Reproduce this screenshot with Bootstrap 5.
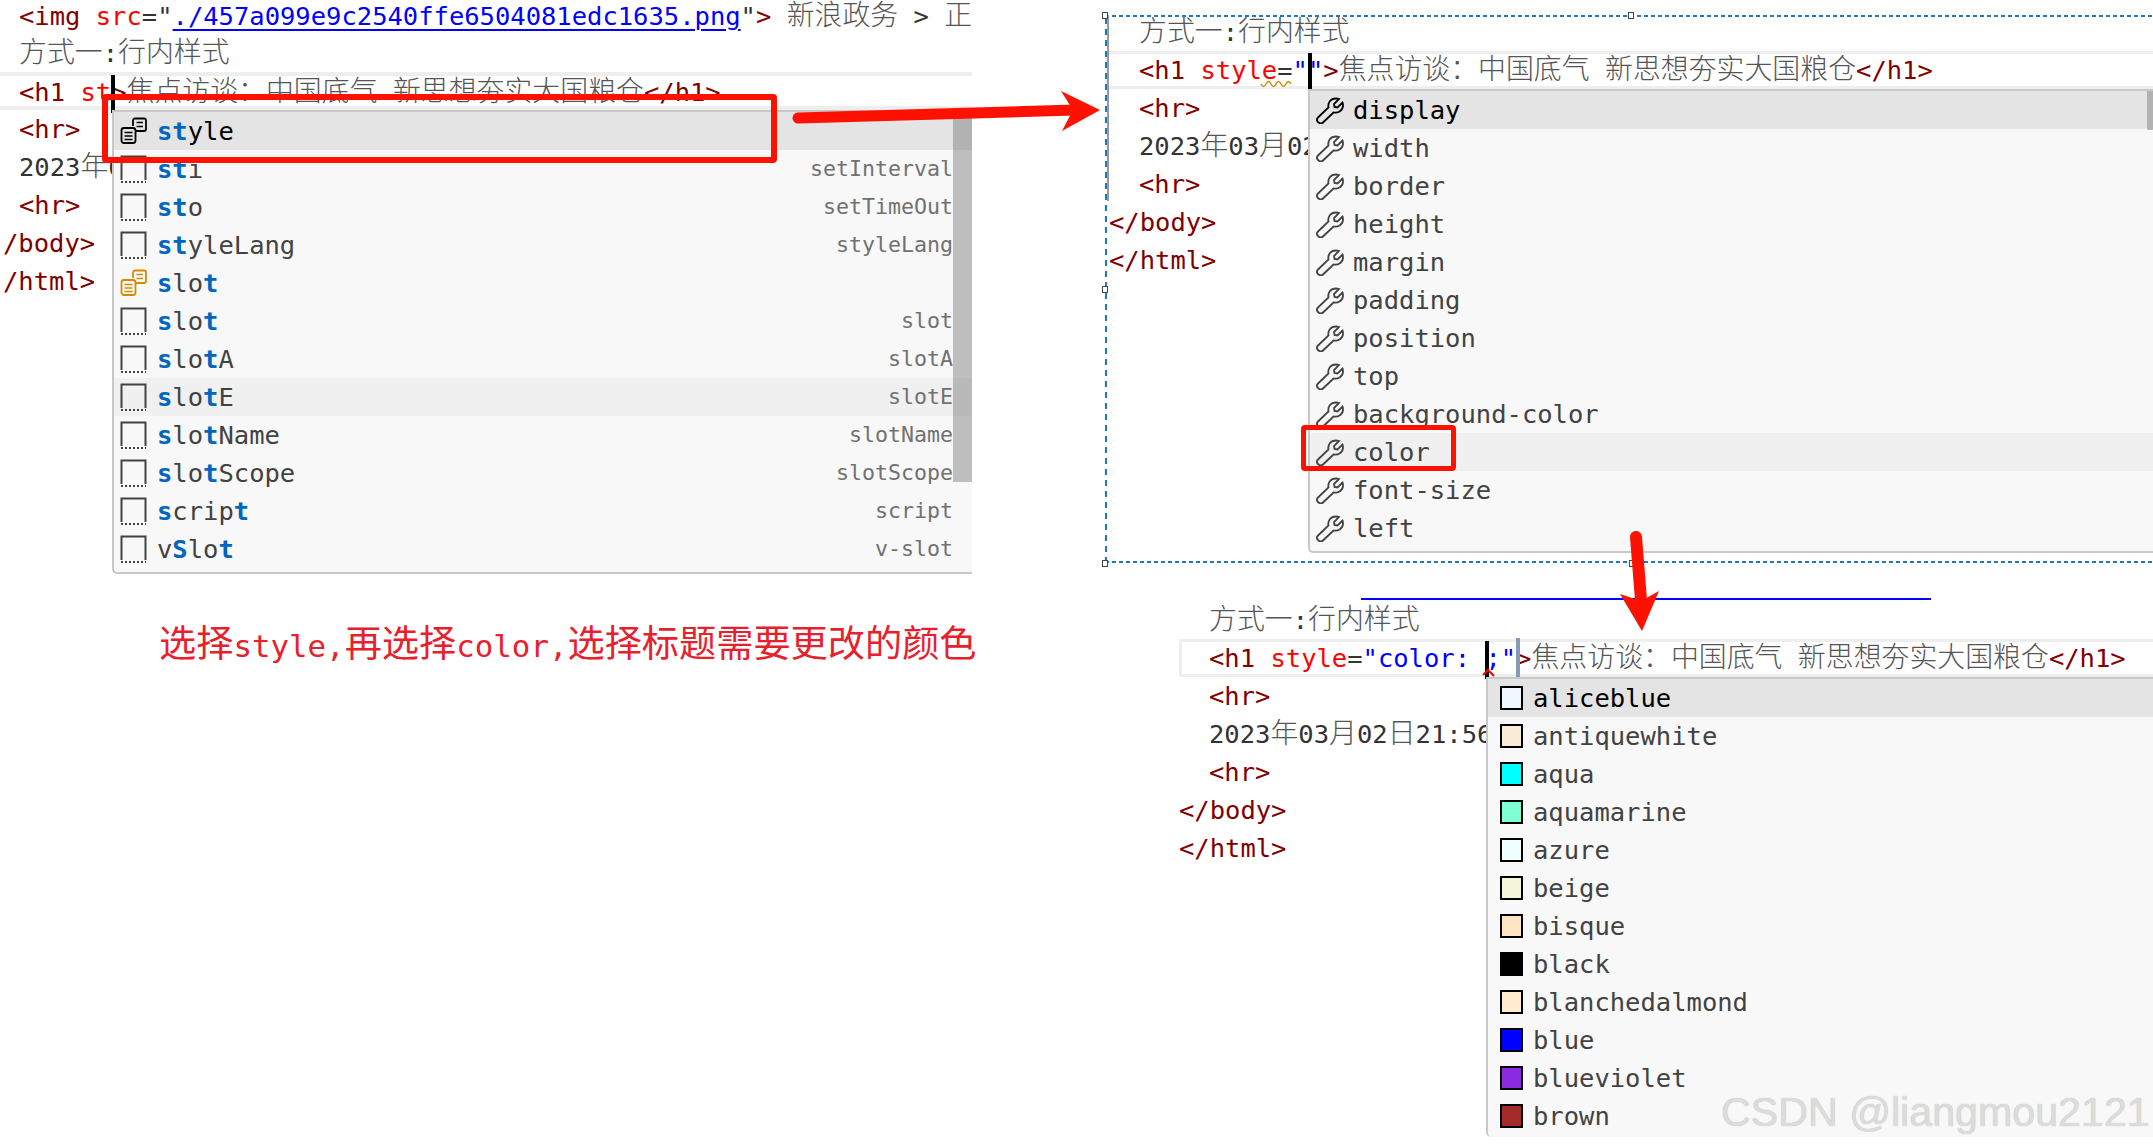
<!DOCTYPE html>
<html lang="zh">
<head>
<meta charset="utf-8">
<title>行内样式</title>
<link href="https://cdn.jsdelivr.net/npm/bootstrap@5.3.0/dist/css/bootstrap.min.css" rel="stylesheet">
<style>
html,body{margin:0;background:#fff}
.canvas{position:relative;width:2153px;height:1146px;overflow:hidden;background:#fff;font-family:"DejaVu Sans Mono","Noto Sans CJK SC",monospace;font-size:25.5px;color:#333}
.pane{position:absolute;overflow-x:clip;overflow-y:visible}
.pane-a{left:0;top:0;width:972px;height:576px}
.pane-b{left:1105px;top:5px;width:1048px;height:553px;padding-top:8px}
.pane-c{left:1179px;top:593px;width:974px;height:548px;padding-top:8px}
.code-row{height:38px;line-height:39px;white-space:pre;box-sizing:border-box;padding-left:var(--ind)}
.pane-a{--ind:19px}.pane-b{--ind:34px}.pane-c{--ind:30px}
.pane-a .first{height:34px;line-height:32px}
.outdent{padding-left:var(--out)}
.pane-a{--out:3px}.pane-b{--out:4px}.pane-c{--out:0px}
.band{border:3px solid #eee;line-height:33px;padding-left:calc(var(--ind) - 3px)}
.pane-a .band{border-width:4px 0;line-height:31px;padding-left:var(--ind)}
.pane-c .band{border-right:0}.pane-b .band{border-right:0}
.tg{color:#800000}.at{color:#f00}.vl{color:#00f}
.cjk{display:inline-block;font-family:"Noto Sans CJK SC",sans-serif;font-size:27.9px;line-height:1;color:#555;font-weight:300}
.lnk{color:#00f;text-decoration:underline;text-decoration-thickness:2px;text-underline-offset:4px}
.caret-wrap{position:relative;display:inline-block;width:0;height:0}
.caret-bar{position:absolute;left:0;top:-26px;width:4px;height:38px;background:#000}
.caret-alt{background:#8699b8;height:41px;top:-29px;left:0}
.sug{position:absolute;background:#f8f8f8;border-top:2px solid #c8c8c8;border-left:2px solid #c8c8c8;border-bottom:2px solid #c8c8c8;border-radius:0 0 0 5px;overflow:hidden}
.sug-a{left:112px;top:110px;width:860px;height:464px}
.sug-b{left:203px;top:84px;width:845px;height:464px}
.sug-c{left:307px;top:84px;width:667px;height:460px;border-bottom:0}
.sug .list-group-item{height:38px;padding:0;border:0;border-radius:0;background:transparent;color:#424242;white-space:pre;line-height:38px}
.sug .list-group-item.cur{background:#e4e4e4;color:#000}
.sug .list-group-item.hov{background:#f0f0f0}
.sug .list-group-item>span:not(.sw){margin-top:-1px}
.sug-a .list-group-item{padding-left:6px}
.sug-b .list-group-item{padding-left:5px}
.sug-c .list-group-item{padding-left:12px}
.hit{color:#0066bf;font-weight:700}
.det{margin-left:auto;margin-right:19px;font-size:21.6px;color:#717171}
.ico{flex:none;margin-right:10px;display:block}
.ico-w{width:29px;height:27px;margin-right:9px}
.sw{flex:none;width:23px;height:24px;border:2px solid #000;margin-right:10px}
.sbar{position:absolute;right:0;top:0;width:19px;height:370px;background:rgba(110,110,110,.42)}
.sbar-b{width:6px;height:39px}
.rbox{position:absolute;border:6px solid #ff1100;border-radius:4px}
.rbox-a{left:102px;top:94px;width:675px;height:69px}
.rbox-b{left:1301px;top:425px;width:155px;height:46px;border-width:5px}
.sel{position:absolute;left:1105px;top:15px;width:1048px;height:548px;background-repeat:no-repeat,no-repeat,no-repeat;background-image:repeating-linear-gradient(90deg,#1f78c0 0 4px,transparent 4px 7px),repeating-linear-gradient(90deg,#1f78c0 0 4px,transparent 4px 7px),repeating-linear-gradient(0deg,#1f78c0 0 6px,transparent 6px 11px);background-size:100% 2px,100% 2px,2px 100%;background-position:0 0,0 100%,0 0}
.gutter{position:absolute;left:1107px;top:15px;width:2px;height:186px;background:#999}
.hnd{position:absolute;width:6px;height:7px;background:#fff;border:1px solid #444}
.blue-rule{position:absolute;left:1361px;top:598px;width:570px;height:2px;background:#00f}
.capt{position:absolute;left:159px;top:621px;line-height:50px;white-space:pre;color:#e8202c;font-size:30.8px;font-family:"DejaVu Sans Mono",monospace}
.capt .cjk{color:#e8202c;font-size:37.2px;font-weight:400}
.wmark{position:absolute;left:1721px;top:1088px;line-height:48px;white-space:pre;font-family:"Liberation Sans",sans-serif;font-size:41.2px;color:#dcdcdc;text-shadow:0 0 1px #b5b5b5}
.anno{position:absolute;left:0;top:0;pointer-events:none}
</style>
</head>
<body>
<svg width="0" height="0" class="position-absolute">
  <defs>
    <symbol id="i-prop" viewBox="0 0 27 28">
      <path d="M13 9V3.500A2 2 0 0 1 15 1.500H24A2 2 0 0 1 26 3.500V12A2 2 0 0 1 24 14H16" fill="none" stroke="currentColor" stroke-width="1.800"/>
      <rect x="1.500" y="11" width="14" height="15" rx="2.500" fill="none" stroke="currentColor" stroke-width="1.800"/>
      <path d="M16.500 5.500H23M16.500 9.500H23M4.500 15.500H12.500M4.500 19H12.500M4.500 22.500H12.500" stroke="currentColor" stroke-width="1.500"/>
    </symbol>
    <symbol id="i-box" viewBox="0 0 27 28">
      <path d="M1.500 25V1.500H25.500V25" fill="none" stroke="#424242" stroke-width="2"/>
      <path d="M1 27H26" stroke="#424242" stroke-width="2" stroke-dasharray="2 2"/>
    </symbol>
    <symbol id="i-wr" viewBox="0 0 29 27">
      <path d="M3 20.500L13.500 10.500C12.500 6 15.500 1.500 21 1.500C22 1.500 23 1.700 24 2L19 7L19.500 10L22.500 10.500L27.500 5.500C28 6.500 28 7.500 28 8.500C28 13.500 23 16.500 18.500 15.500L8 25.500C6.500 27 4.500 26.500 3 25C1.500 23.500 1.500 22 3 20.500Z" fill="none" stroke="currentColor" stroke-width="1.800"/>
    </symbol>
  </defs>
</svg>

<div class="canvas">

  <!-- left editor -->
  <div class="pane pane-a">
    <div class="code-row first"><span class="tg">&lt;img </span><span class="at">src</span>="<span class="lnk">./457a099e9c2540ffe6504081edc1635.png</span>"<span class="tg">&gt;</span> <span class="cjk">新浪政务</span> &gt; <span class="cjk">正</span></div>
    <div class="code-row"><span class="cjk">方式一</span>:<span class="cjk">行内样式</span></div>
    <div class="code-row band"><span class="tg">&lt;h1 </span><span class="at">st</span><span class="caret-wrap"><span class="caret-bar"></span></span><span class="tg">&gt;</span><span class="cjk">焦点访谈：中国底气</span> <span class="cjk">新思想夯实大国粮仓</span><span class="tg">&lt;/h1&gt;</span></div>
    <div class="code-row tg">&lt;hr&gt;</div>
    <div class="code-row">2023<span class="cjk">年</span>03</div>
    <div class="code-row tg">&lt;hr&gt;</div>
    <div class="code-row outdent tg">/body&gt;</div>
    <div class="code-row outdent tg">/html&gt;</div>

    <div class="sug sug-a list-group">
      <div class="list-group-item cur d-flex align-items-center"><svg class="ico" width="27" height="28"><use href="#i-prop"/></svg><span><span class="hit">st</span>yle</span></div>
      <div class="list-group-item d-flex align-items-center"><svg class="ico" width="27" height="28"><use href="#i-box"/></svg><span><span class="hit">st</span>i</span><span class="det">setInterval</span></div>
      <div class="list-group-item d-flex align-items-center"><svg class="ico" width="27" height="28"><use href="#i-box"/></svg><span><span class="hit">st</span>o</span><span class="det">setTimeOut</span></div>
      <div class="list-group-item d-flex align-items-center"><svg class="ico" width="27" height="28"><use href="#i-box"/></svg><span><span class="hit">st</span>yleLang</span><span class="det">styleLang</span></div>
      <div class="list-group-item d-flex align-items-center"><svg class="ico" width="27" height="28" style="color:#d58a00"><use href="#i-prop"/></svg><span><span class="hit">s</span>lo<span class="hit">t</span></span></div>
      <div class="list-group-item d-flex align-items-center"><svg class="ico" width="27" height="28"><use href="#i-box"/></svg><span><span class="hit">s</span>lo<span class="hit">t</span></span><span class="det">slot</span></div>
      <div class="list-group-item d-flex align-items-center"><svg class="ico" width="27" height="28"><use href="#i-box"/></svg><span><span class="hit">s</span>lo<span class="hit">t</span>A</span><span class="det">slotA</span></div>
      <div class="list-group-item hov d-flex align-items-center"><svg class="ico" width="27" height="28"><use href="#i-box"/></svg><span><span class="hit">s</span>lo<span class="hit">t</span>E</span><span class="det">slotE</span></div>
      <div class="list-group-item d-flex align-items-center"><svg class="ico" width="27" height="28"><use href="#i-box"/></svg><span><span class="hit">s</span>lo<span class="hit">t</span>Name</span><span class="det">slotName</span></div>
      <div class="list-group-item d-flex align-items-center"><svg class="ico" width="27" height="28"><use href="#i-box"/></svg><span><span class="hit">s</span>lo<span class="hit">t</span>Scope</span><span class="det">slotScope</span></div>
      <div class="list-group-item d-flex align-items-center"><svg class="ico" width="27" height="28"><use href="#i-box"/></svg><span><span class="hit">s</span>crip<span class="hit">t</span></span><span class="det">script</span></div>
      <div class="list-group-item d-flex align-items-center"><svg class="ico" width="27" height="28"><use href="#i-box"/></svg><span>v<span class="hit">S</span>lo<span class="hit">t</span></span><span class="det">v-slot</span></div>
      <div class="sbar"></div>
    </div>
  </div>

  <!-- right-top editor -->
  <div class="pane pane-b">
    <div class="code-row"><span class="cjk">方式一</span>:<span class="cjk">行内样式</span></div>
    <div class="code-row band"><span class="tg">&lt;h1 </span><span class="at">style</span>=<span class="vl">"</span><span class="caret-wrap"><span class="caret-bar"></span></span><span class="vl">"</span><span class="tg">&gt;</span><span class="cjk">焦点访谈：中国底气</span> <span class="cjk">新思想夯实大国粮仓</span><span class="tg">&lt;/h1&gt;</span></div>
    <div class="code-row tg">&lt;hr&gt;</div>
    <div class="code-row">2023<span class="cjk">年</span>03<span class="cjk">月</span>02</div>
    <div class="code-row tg">&lt;hr&gt;</div>
    <div class="code-row outdent tg">&lt;/body&gt;</div>
    <div class="code-row outdent tg">&lt;/html&gt;</div>

    <div class="sug sug-b list-group">
      <div class="list-group-item cur d-flex align-items-center"><svg class="ico ico-w"><use href="#i-wr"/></svg><span>display</span></div>
      <div class="list-group-item d-flex align-items-center"><svg class="ico ico-w"><use href="#i-wr"/></svg><span>width</span></div>
      <div class="list-group-item d-flex align-items-center"><svg class="ico ico-w"><use href="#i-wr"/></svg><span>border</span></div>
      <div class="list-group-item d-flex align-items-center"><svg class="ico ico-w"><use href="#i-wr"/></svg><span>height</span></div>
      <div class="list-group-item d-flex align-items-center"><svg class="ico ico-w"><use href="#i-wr"/></svg><span>margin</span></div>
      <div class="list-group-item d-flex align-items-center"><svg class="ico ico-w"><use href="#i-wr"/></svg><span>padding</span></div>
      <div class="list-group-item d-flex align-items-center"><svg class="ico ico-w"><use href="#i-wr"/></svg><span>position</span></div>
      <div class="list-group-item d-flex align-items-center"><svg class="ico ico-w"><use href="#i-wr"/></svg><span>top</span></div>
      <div class="list-group-item d-flex align-items-center"><svg class="ico ico-w"><use href="#i-wr"/></svg><span>background-color</span></div>
      <div class="list-group-item hov d-flex align-items-center"><svg class="ico ico-w"><use href="#i-wr"/></svg><span>color</span></div>
      <div class="list-group-item d-flex align-items-center"><svg class="ico ico-w"><use href="#i-wr"/></svg><span>font-size</span></div>
      <div class="list-group-item d-flex align-items-center"><svg class="ico ico-w"><use href="#i-wr"/></svg><span>left</span></div>
      <div class="sbar sbar-b"></div>
    </div>
  </div>

  <!-- right-bottom editor -->
  <div class="pane pane-c">
    <div class="code-row"><span class="cjk">方式一</span>:<span class="cjk">行内样式</span></div>
    <div class="code-row band"><span class="tg">&lt;h1 </span><span class="at">style</span>=<span class="vl">"color: </span><span class="caret-wrap"><span class="caret-bar"></span></span><span class="vl">;"</span><span class="caret-wrap"><span class="caret-bar caret-alt"></span></span><span class="tg">&gt;</span><span class="cjk">焦点访谈：中国底气</span> <span class="cjk">新思想夯实大国粮仓</span><span class="tg">&lt;/h1&gt;</span></div>
    <div class="code-row tg">&lt;hr&gt;</div>
    <div class="code-row">2023<span class="cjk">年</span>03<span class="cjk">月</span>02<span class="cjk">日</span>21:56</div>
    <div class="code-row tg">&lt;hr&gt;</div>
    <div class="code-row outdent tg">&lt;/body&gt;</div>
    <div class="code-row outdent tg">&lt;/html&gt;</div>

    <div class="sug sug-c list-group">
      <div class="list-group-item cur d-flex align-items-center"><span class="sw" style="background:aliceblue"></span><span>aliceblue</span></div>
      <div class="list-group-item d-flex align-items-center"><span class="sw" style="background:antiquewhite"></span><span>antiquewhite</span></div>
      <div class="list-group-item d-flex align-items-center"><span class="sw" style="background:aqua"></span><span>aqua</span></div>
      <div class="list-group-item d-flex align-items-center"><span class="sw" style="background:aquamarine"></span><span>aquamarine</span></div>
      <div class="list-group-item d-flex align-items-center"><span class="sw" style="background:azure"></span><span>azure</span></div>
      <div class="list-group-item d-flex align-items-center"><span class="sw" style="background:beige"></span><span>beige</span></div>
      <div class="list-group-item d-flex align-items-center"><span class="sw" style="background:bisque"></span><span>bisque</span></div>
      <div class="list-group-item d-flex align-items-center"><span class="sw" style="background:black"></span><span>black</span></div>
      <div class="list-group-item d-flex align-items-center"><span class="sw" style="background:blanchedalmond"></span><span>blanchedalmond</span></div>
      <div class="list-group-item d-flex align-items-center"><span class="sw" style="background:blue"></span><span>blue</span></div>
      <div class="list-group-item d-flex align-items-center"><span class="sw" style="background:blueviolet"></span><span>blueviolet</span></div>
      <div class="list-group-item d-flex align-items-center"><span class="sw" style="background:brown"></span><span>brown</span></div>
    </div>
  </div>

  <!-- selection frame of the middle picture -->
  <div class="sel"></div>
  <div class="gutter"></div>
  <span class="hnd" style="left:1102px;top:12px"></span>
  <span class="hnd" style="left:1628px;top:12px"></span>
  <span class="hnd" style="left:1102px;top:286px"></span>
  <span class="hnd" style="left:1102px;top:560px"></span>
  <span class="hnd" style="left:1629px;top:560px"></span>
  <div class="blue-rule"></div>

  <!-- annotations -->
  <div class="rbox rbox-a"></div>
  <div class="rbox rbox-b"></div>
  <svg class="anno" width="2153" height="1146">
    <path d="M1261 84q2.500 5 5 0t5 0t5 0t5 0t5 0t5 0" fill="none" stroke="#c89000" stroke-width="1.500"/>
    <path d="M1483 675l5-5l6 6" fill="none" stroke="#f00" stroke-width="2"/>
    <path d="M798 118L1075 110" stroke="#ff1100" stroke-width="11" stroke-linecap="round" fill="none"/>
    <polygon points="1100,110 1061,91 1073,110 1062,131" fill="#ff1100"/>
    <path d="M1636 537L1641 600" stroke="#ff1100" stroke-width="12" stroke-linecap="round" fill="none"/>
    <polygon points="1642,631 1620,594 1641,601 1659,591" fill="#ff1100"/>
  </svg>

  <div class="capt"><span class="cjk">选择</span>style,<span class="cjk">再选择</span>color,<span class="cjk">选择标题需要更改的颜色</span></div>
  <div class="wmark">CSDN @liangmou2121</div>
</div>

<script src="https://cdn.jsdelivr.net/npm/bootstrap@5.3.0/dist/js/bootstrap.bundle.min.js"></script>
</body>
</html>
